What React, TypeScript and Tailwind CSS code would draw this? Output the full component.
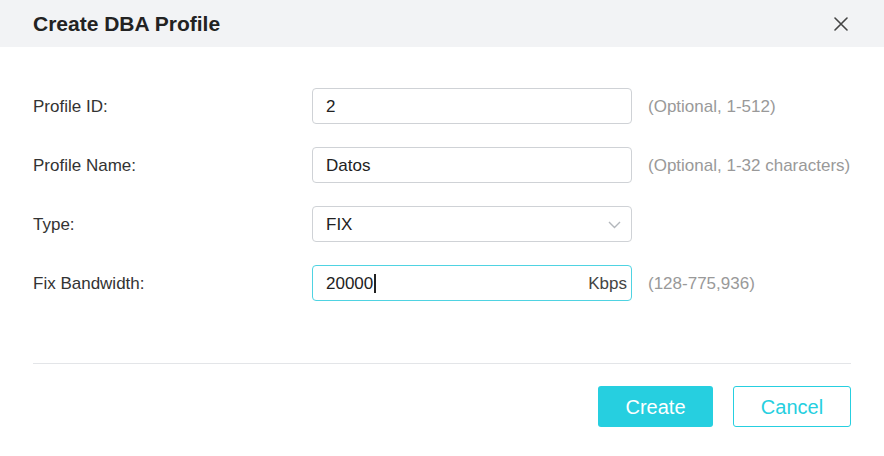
import React from 'react';

interface FieldRowProps {
  label: string;
  hint?: string;
  children: React.ReactNode;
}

const FieldRow: React.FC<FieldRowProps> = ({ label, hint, children }) => {
  return (
    <div className="flex h-[36px] items-center">
      <label className="w-[279px] pt-[2px] text-[17px] text-[#333]">{label}</label>
      <div className="w-[320px] h-full">{children}</div>
      {hint && <span className="ml-[16px] pt-[2px] text-[17px] text-[#999]">{hint}</span>}
    </div>
  );
};

const TextBox: React.FC<{ value: string }> = ({ value }) => (
  <div className="flex h-full items-center rounded-[4px] border border-[#cfd2d6] bg-white px-[13px] pt-[1px] text-[17px] text-[#222]">
    {value}
  </div>
);

const App: React.FC = () => {
  return (
    <div className="w-[884px] h-[456px] bg-white font-['Liberation_Sans',Arial,sans-serif]">
      {/* header */}
      <div className="flex h-[47px] items-center justify-between bg-[#f2f3f5] pl-[33px] pr-[36px]">
        <h2 className="text-[21px] font-bold text-[#222]">Create DBA Profile</h2>
        <svg width="14" height="14" viewBox="0 0 14 14" className="text-[#444]">
          <path d="M1 1L13 13M13 1L1 13" stroke="currentColor" strokeWidth="1.6" strokeLinecap="round" />
        </svg>
      </div>

      {/* form */}
      <div className="flex flex-col gap-[23px] pl-[33px] pt-[41px]">
        <FieldRow label="Profile ID:" hint="(Optional, 1-512)">
          <TextBox value="2" />
        </FieldRow>
        <FieldRow label="Profile Name:" hint="(Optional, 1-32 characters)">
          <TextBox value="Datos" />
        </FieldRow>
        <FieldRow label="Type:">
          <div className="flex h-full items-center justify-between rounded-[4px] border border-[#cfd2d6] bg-white pl-[13px] pr-[10px] pt-[1px] text-[17px] text-[#222]">
            <span>FIX</span>
            <svg width="13" height="8" viewBox="0 0 13 8">
              <path d="M1 1L6.5 6.5L12 1" fill="none" stroke="#b3b7bc" strokeWidth="1.4" />
            </svg>
          </div>
        </FieldRow>
        <FieldRow label="Fix Bandwidth:" hint="(128-775,936)">
          <div className="flex h-full items-center justify-between rounded-[4px] border border-[#4fd3e2] bg-white pl-[13px] pr-[4px] pt-[1px] text-[17px] text-[#222]">
            <span className="flex items-center">
              20000
              <span className="ml-[1px] inline-block h-[19px] w-[1.5px] bg-[#222]" />
            </span>
            <span className="text-[#444]">Kbps</span>
          </div>
        </FieldRow>
      </div>

      {/* footer */}
      <div className="mx-[33px] mt-[62px] border-t border-[#e3e5e8]" />
      <div className="flex justify-end gap-[20px] pr-[33px] pt-[22px]">
        <button className="h-[41px] w-[115px] rounded-[3px] bg-[#26cfe0] text-[20px] text-white">Create</button>
        <button className="h-[41px] w-[118px] rounded-[3px] border-[1.5px] border-[#26cfe0] bg-white text-[20px] text-[#26cfe0]">Cancel</button>
      </div>
    </div>
  );
};

export default App;
